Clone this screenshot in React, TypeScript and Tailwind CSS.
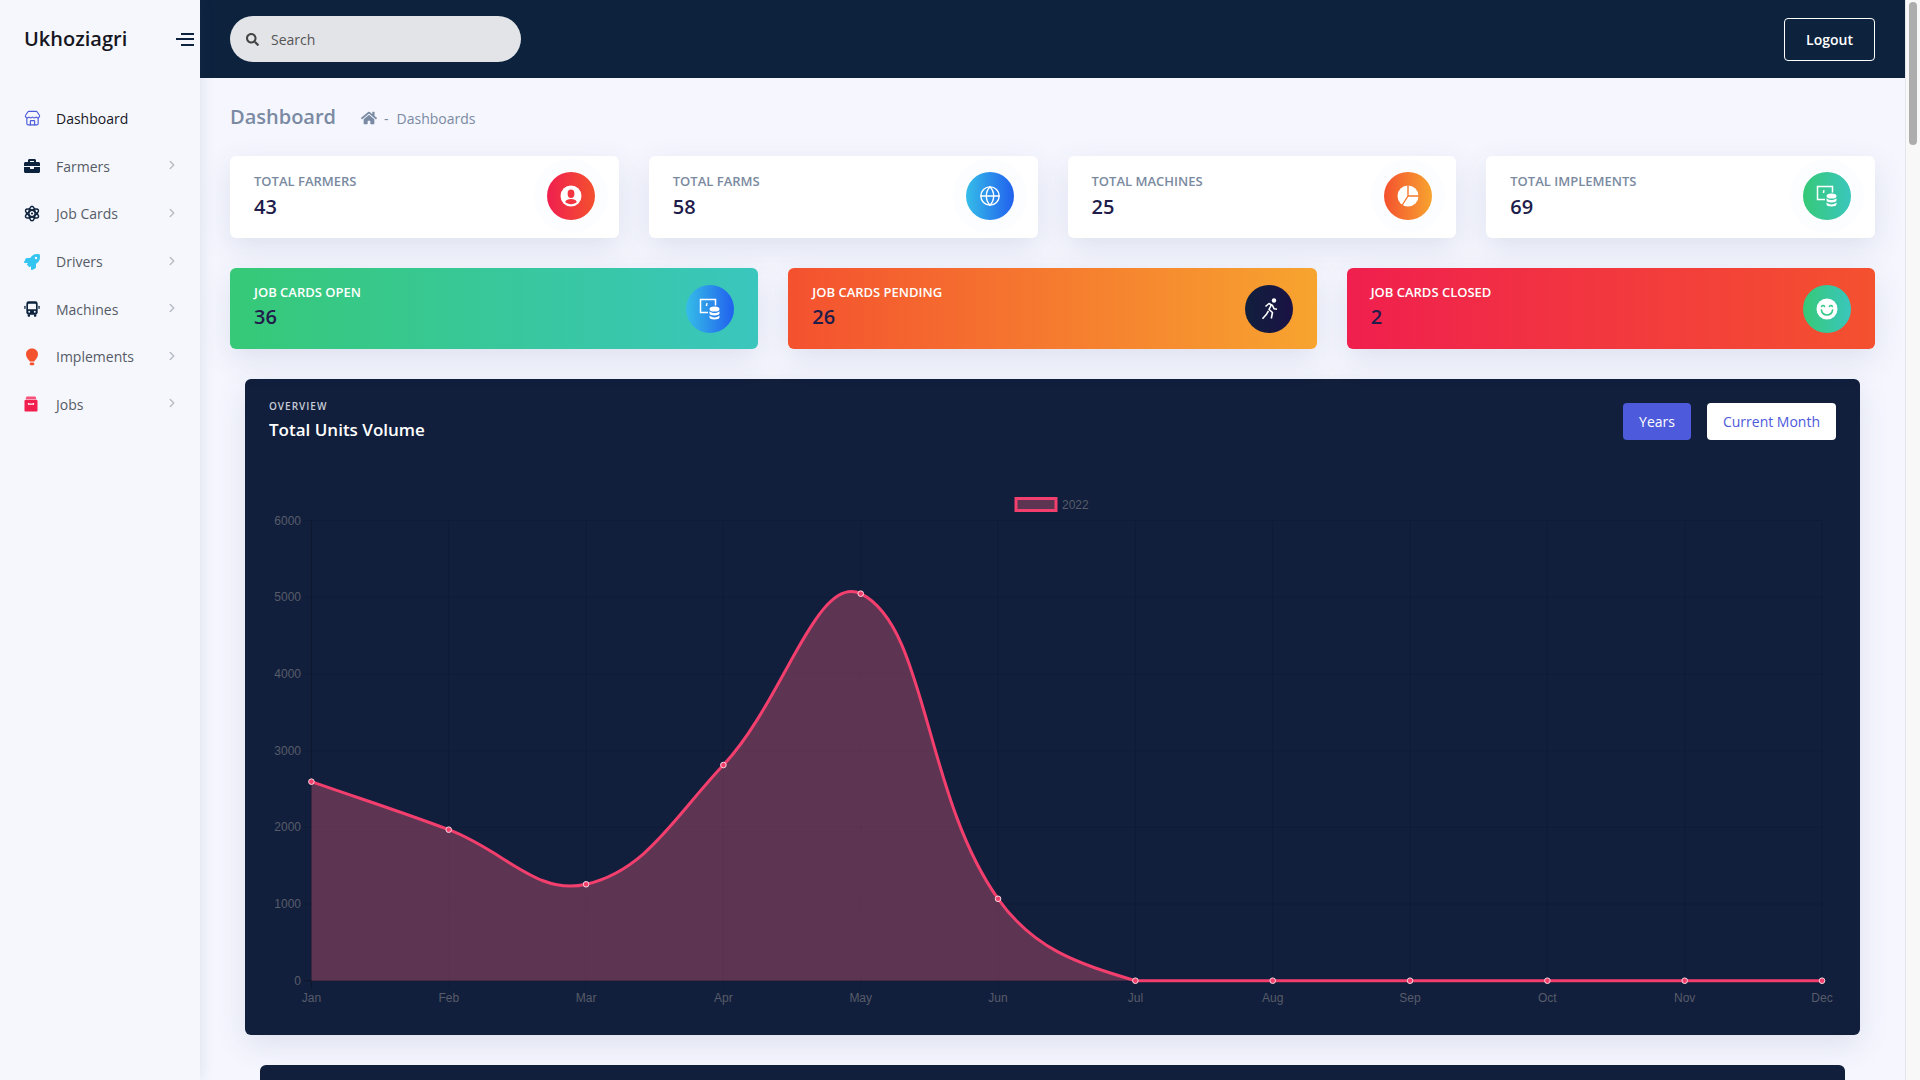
import { Store, ChevronRight, Globe } from "lucide-react";
import { FaBriefcase, FaRocket, FaSearch, FaHome } from "react-icons/fa";
import type { ReactNode } from "react";

const font = "font-['Open_Sans','Noto_Sans',sans-serif]";

function AtomIcon() {
  return (
    <svg width="16" height="17" viewBox="0 0 24 24" fill="none" stroke="#0d223d" strokeWidth="2.2">
      <ellipse cx="12" cy="12" rx="4.6" ry="11" />
      <ellipse cx="12" cy="12" rx="4.6" ry="11" transform="rotate(60 12 12)" />
      <ellipse cx="12" cy="12" rx="4.6" ry="11" transform="rotate(120 12 12)" />
      <circle cx="12" cy="12" r="1.6" fill="#0d223d" stroke="none" />
    </svg>
  );
}

function BusIcon() {
  return (
    <svg width="16" height="16" viewBox="0 0 24 24" fill="#0d223d">
      <rect x="3.5" y="0.5" width="17" height="20" rx="3.5" />
      <rect x="6" y="4" width="12" height="8.5" rx="1" fill="#f5f7fc" />
      <rect x="5.5" y="20" width="3.6" height="3.5" rx="1" />
      <rect x="14.9" y="20" width="3.6" height="3.5" rx="1" />
      <rect x="0.5" y="7" width="1.8" height="5" rx="0.9" />
      <rect x="21.7" y="7" width="1.8" height="5" rx="0.9" />
      <circle cx="7.8" cy="16.2" r="1.4" fill="#f5f7fc" />
      <circle cx="16.2" cy="16.2" r="1.4" fill="#f5f7fc" />
    </svg>
  );
}

function Balloon() {
  return (
    <svg width="16" height="18" viewBox="0 0 16 18" fill="#f4512f">
      <path d="M8 0.5c-3.6 0-6 2.6-6 5.7 0 3 2.6 5.6 3.8 7.3h4.4c1.2-1.7 3.8-4.3 3.8-7.3 0-3.1-2.4-5.7-6-5.7z" />
      <rect x="5.8" y="14.6" width="4.4" height="2.6" rx="0.8" />
    </svg>
  );
}

function ArchiveBox() {
  return (
    <svg width="14" height="16" viewBox="0 0 14 16">
      <path d="M2.6 0.5h8.8l1.2 3H1.4z" fill="#f7517a" />
      <rect x="0.5" y="4" width="13" height="11.5" rx="0.8" fill="#f01f4e" />
      <path d="M4.5 7v1.2h5V7" fill="none" stroke="#fff" strokeWidth="1.2" />
    </svg>
  );
}

function UserBadge() {
  return (
    <svg width="24" height="24" viewBox="0 0 24 24">
      <circle cx="12" cy="12" r="10.5" fill="#fff" />
      <ellipse cx="12" cy="9.8" rx="3.4" ry="4.2" fill="#f2353f" />
      <path d="M6.2 18c.8-2.2 3-3 5.8-3s5 .8 5.8 3c-1.4 1.4-3.5 2.2-5.8 2.2s-4.4-.8-5.8-2.2z" fill="#f2353f" />
    </svg>
  );
}

function PieBadge() {
  return (
    <svg width="24" height="24" viewBox="0 0 24 24">
      <circle cx="12" cy="12" r="10.5" fill="#fff" />
      <path d="M12 1v11h11M12 12l-6 9.5" fill="none" stroke="#f5792f" strokeWidth="1.4" />
    </svg>
  );
}

function ScreenDb() {
  return (
    <svg width="24" height="24" viewBox="0 0 24 24" fill="none">
      <path d="M10 15.5H2.5V2.5h15v6" stroke="#fff" strokeWidth="1.5" />
      <path d="M9 6.2 8.4 9" stroke="#fff" strokeWidth="1.5" />
      <ellipse cx="16.5" cy="12" rx="5" ry="2.6" fill="#fff" />
      <path d="M11.5 14.2v2c0 1.3 2.2 2.3 5 2.3s5-1 5-2.3v-2c-1 1.1-2.9 1.8-5 1.8s-4-.7-5-1.8z" fill="#fff" />
      <path d="M11.5 18.6v1.6c0 1.3 2.2 2.3 5 2.3s5-1 5-2.3v-1.6c-1 1.1-2.9 1.8-5 1.8s-4-.7-5-1.8z" fill="#fff" />
    </svg>
  );
}

function Runner() {
  return (
    <svg width="24" height="24" viewBox="0 0 24 24" fill="none" stroke="#fff" strokeWidth="1.6" strokeLinejoin="round">
      <circle cx="17" cy="3.5" r="2.2" fill="#fff" stroke="none" />
      <path d="M8.5 9.5 12 6.5l3.5 2 1.5 3.2 3 .6" />
      <path d="M14.5 7.5l-2.5 5 3.5 3-1.2 6" />
      <path d="M11.5 14l-2 3.2-4 4.5" />
    </svg>
  );
}

function SmileBadge() {
  return (
    <svg width="24" height="24" viewBox="0 0 24 24" fill="none">
      <circle cx="12" cy="12" r="10.5" fill="#fff" />
      <path d="M6.6 9.6c.6-1.4 2.4-1.4 3 0M14.4 9.6c.6-1.4 2.4-1.4 3 0" stroke="#38c98a" strokeWidth="1.4" strokeLinecap="round" />
      <path d="M6.4 13c.6 3.2 2.8 5 5.6 5s5-1.8 5.6-5" stroke="#38c98a" strokeWidth="1.6" strokeLinecap="round" />
    </svg>
  );
}

const navItems: { label: string; icon: ReactNode; arrow: boolean }[] = [
  { label: "Dashboard", icon: <Store size={17} color="#4c5adb" strokeWidth={1.6} />, arrow: false },
  { label: "Farmers", icon: <FaBriefcase size={16} color="#0d223d" />, arrow: true },
  { label: "Job Cards", icon: <AtomIcon />, arrow: true },
  { label: "Drivers", icon: <FaRocket size={16} color="#33c4f0" />, arrow: true },
  { label: "Machines", icon: <BusIcon />, arrow: true },
  { label: "Implements", icon: <Balloon />, arrow: true },
  { label: "Jobs", icon: <ArchiveBox />, arrow: true },
];

const totals = [
  { label: "TOTAL FARMERS", value: 43, circle: "from-[#f01f4e] to-[#f4512f]", icon: <UserBadge /> },
  { label: "TOTAL FARMS", value: 58, circle: "from-[#35bde8] to-[#2160ee]", icon: <Globe size={22} color="#fff" strokeWidth={1.5} /> },
  { label: "TOTAL MACHINES", value: 25, circle: "from-[#f4512f] to-[#f7a42f]", icon: <PieBadge /> },
  { label: "TOTAL IMPLEMENTS", value: 69, circle: "from-[#36c977] to-[#3ac6bd]", icon: <ScreenDb /> },
];

const jobCards = [
  { label: "JOB CARDS OPEN", value: 36, bg: "from-[#36c977] to-[#3ac6bd]", circle: "from-[#35bde8] to-[#2160ee]", icon: <ScreenDb /> },
  { label: "JOB CARDS PENDING", value: 26, bg: "from-[#f4512f] to-[#f7a42f]", circle: "from-[#111f3d] to-[#1a1245]", icon: <Runner /> },
  { label: "JOB CARDS CLOSED", value: 2, bg: "from-[#f01f4e] to-[#f4512f]", circle: "from-[#36c977] to-[#3ac6bd]", icon: <SmileBadge /> },
];

const months = ["Jan", "Feb", "Mar", "Apr", "May", "Jun", "Jul", "Aug", "Sep", "Oct", "Nov", "Dec"];
const volume = [2595, 1969, 1257, 2812, 5046, 1068, 0, 0, 0, 0, 0, 0];

const X0 = 66.4;
const STEP = 137.33;
const Y0 = 505.7;
const UNIT = 0.0767;

const pts = volume.map((v, i) => ({ x: X0 + i * STEP, y: Y0 - v * UNIT }));

// same spline chart.js uses for tension 0.4
function curve() {
  const t = 0.4;
  const ctrl = pts.map((p, i) => {
    const a = pts[i - 1] ?? p;
    const b = pts[i + 1] ?? p;
    const d1 = Math.hypot(p.x - a.x, p.y - a.y);
    const d2 = Math.hypot(b.x - p.x, b.y - p.y);
    const s = d1 + d2 || 1;
    return {
      px: p.x - (t * d1 * (b.x - a.x)) / s,
      py: Math.min(p.y - (t * d1 * (b.y - a.y)) / s, Y0),
      nx: p.x + (t * d2 * (b.x - a.x)) / s,
      ny: Math.min(p.y + (t * d2 * (b.y - a.y)) / s, Y0),
    };
  });
  let d = `M${pts[0].x} ${pts[0].y}`;
  for (let i = 1; i < pts.length; i++) {
    d += ` C${ctrl[i - 1].nx} ${ctrl[i - 1].ny} ${ctrl[i].px} ${ctrl[i].py} ${pts[i].x} ${pts[i].y}`;
  }
  return d;
}

function VolumeChart() {
  const line = curve();
  const area = `${line} L${pts[11].x} ${Y0} L${pts[0].x} ${Y0} Z`;
  const font12 = { fontFamily: "'Liberation Sans', sans-serif", fontSize: 12, fill: "#585c68" };
  return (
    <svg width="1615" height="560" className="block">
      <rect x="771" y="23.5" width="40" height="12" fill="rgba(255,99,132,0.32)" stroke="#f23f6d" strokeWidth="3" />
      <text x="817" y="33.5" {...font12}>2022</text>
      {[0, 1, 2, 3, 4, 5, 6].map((n) => {
        const y = Y0 - n * 1000 * UNIT;
        return (
          <g key={n}>
            <line x1={X0 - 8} x2={pts[11].x} y1={y} y2={y} stroke={n === 0 ? "rgba(0,0,0,0.25)" : "rgba(0,0,0,0.1)"} />
            <text x="56" y={y + 4} textAnchor="end" {...font12}>{n * 1000}</text>
          </g>
        );
      })}
      {pts.map((p, i) => (
        <g key={months[i]}>
          <line x1={p.x} x2={p.x} y1={Y0 - 6000 * UNIT} y2={Y0 + 8} stroke={i === 0 ? "rgba(0,0,0,0.25)" : "rgba(0,0,0,0.1)"} />
          <text x={p.x} y={Y0 + 21} textAnchor="middle" {...font12}>{months[i]}</text>
        </g>
      ))}
      <path d={area} fill="rgba(255,99,132,0.32)" />
      <path d={line} fill="none" stroke="#f23f6d" strokeWidth="3" />
      {pts.map((p, i) => (
        <circle key={i} cx={p.x} cy={p.y} r="2.8" fill="#f23f6d" stroke="#f6d5de" strokeWidth="1" />
      ))}
    </svg>
  );
}

export default function App() {
  return (
    <div className={`${font} flex h-screen w-full overflow-hidden bg-[#f5f6fe]`}>
      <aside className="z-10 h-full w-[200px] shrink-0 bg-[#f5f7fc] shadow-[0_0_14px_rgba(60,75,110,0.14)]">
        <div className="flex h-[78px] items-center justify-between pr-[6px] pl-[24px]">
          <span className="text-[20px] font-semibold text-[#16161f]">Ukhoziagri</span>
          <div className="flex w-[18px] flex-col items-end gap-[3.5px]">
            <div className="h-[2px] w-[13px] bg-[#0d223d]" />
            <div className="h-[2px] w-[18px] bg-[#0d223d]" />
            <div className="h-[2px] w-[13px] bg-[#0d223d]" />
          </div>
        </div>
        <nav className="mt-[17px]">
          {navItems.map((item) => (
            <div key={item.label} className="flex h-[47.6px] items-center pr-[21px] pl-[24px]">
              <div className="flex w-[32px] items-center">{item.icon}</div>
              <span className={`flex-1 text-[14px] ${item.arrow ? "text-[#555b66]" : "font-medium text-[#16161f]"}`}>
                {item.label}
              </span>
              {item.arrow && <ChevronRight size={14} color="#b9bec6" strokeWidth={2.6} className="mb-[2px]" />}
            </div>
          ))}
        </nav>
      </aside>

      <main className="h-full min-w-0 flex-1 overflow-hidden">
        <header className="flex h-[78px] items-center justify-between bg-[#0d223d] px-[30px]">
          <div className="flex h-[46px] w-[291px] items-center gap-[12px] rounded-[23px] bg-[#e3e4e8] pl-[16px]">
            <FaSearch size={13} color="#444" />
            <span className="text-[14px] text-[#555]">Search</span>
          </div>
          <button className="h-[43px] w-[91px] rounded-[4px] border border-white text-[14px] font-semibold text-white">
            Logout
          </button>
        </header>

        <div className="flex h-[54px] items-end px-[30px]">
          <div className="flex h-[30px] items-center text-[#7a8aa2]">
            <h1 className="text-[20px] font-semibold">Dashboard</h1>
            <FaHome size={16} className="mt-[2px] ml-[25px]" />
            <span className="mt-[2px] ml-[7px] text-[14px]">-</span>
            <span className="mt-[2px] ml-[8px] text-[14px]">Dashboards</span>
          </div>
        </div>

        <div className="mt-[24px] grid grid-cols-4 gap-[30px] px-[30px]">
          {totals.map((c) => (
            <div key={c.label} className="flex h-[82px] items-center justify-between rounded-[6px] bg-white px-[24px] shadow-[0_10px_30px_rgba(70,85,130,0.13)]">
              <div className="mb-[3px]">
                <div className="text-[13px] leading-[18px] font-semibold text-[#7a8a9f]">{c.label}</div>
                <div className="mt-[3px] text-[20px] leading-[27px] font-semibold text-[#211c4a]">{c.value}</div>
              </div>
              <div className={`mb-[2px] flex h-[48px] w-[48px] items-center justify-center rounded-full bg-linear-to-r/srgb shadow-[0_0_0_13px_rgba(235,240,245,0.14)] ${c.circle}`}>
                {c.icon}
              </div>
            </div>
          ))}
        </div>

        <div className="mt-[30px] grid grid-cols-3 gap-[30px] px-[30px]">
          {jobCards.map((c) => (
            <div key={c.label} className={`flex h-[81px] items-center justify-between rounded-[6px] bg-linear-to-r/srgb px-[24px] shadow-[0_10px_30px_rgba(70,85,130,0.13)] ${c.bg}`}>
              <div className="mb-[4px]">
                <div className="text-[13px] leading-[18px] font-semibold text-white">{c.label}</div>
                <div className="mt-[2px] text-[20px] leading-[27px] font-semibold text-[#211c4a]">{c.value}</div>
              </div>
              <div className={`flex h-[48px] w-[48px] items-center justify-center rounded-full bg-linear-to-r/srgb ${c.circle}`}>
                {c.icon}
              </div>
            </div>
          ))}
        </div>

        <section className="mx-[45px] mt-[30px] h-[656px] rounded-[6px] bg-[#111f3d] shadow-[0_10px_30px_rgba(70,85,130,0.13)]">
          <div className="flex h-[96px] items-start justify-between px-[24px] pt-[24px]">
            <div>
              <div className="mt-[-4px] text-[10px] leading-[14px] font-semibold tracking-[1px] text-[#c7ccd6]">OVERVIEW</div>
              <div className="mt-[5px] text-[17px] leading-[24px] font-semibold text-white">Total Units Volume</div>
            </div>
            <div className="flex gap-[16px]">
              <button className="h-[37px] w-[68px] rounded-[4px] bg-[#4c5adb] text-[14px] text-white">Years</button>
              <button className="h-[37px] w-[129px] rounded-[4px] bg-white text-[14px] text-[#4c5adb]">Current Month</button>
            </div>
          </div>
          <VolumeChart />
        </section>

        <section className="mx-[60px] mt-[30px] h-[400px] rounded-[6px] bg-[#111f3d]" />
      </main>

      <div className="h-full w-[15px] shrink-0 border-l border-[#e4e6ea] bg-[#f8f8f8] px-[3px] pt-[2px]">
        <div className="h-[143px] rounded-full bg-[#adadad]" />
      </div>
    </div>
  );
}
